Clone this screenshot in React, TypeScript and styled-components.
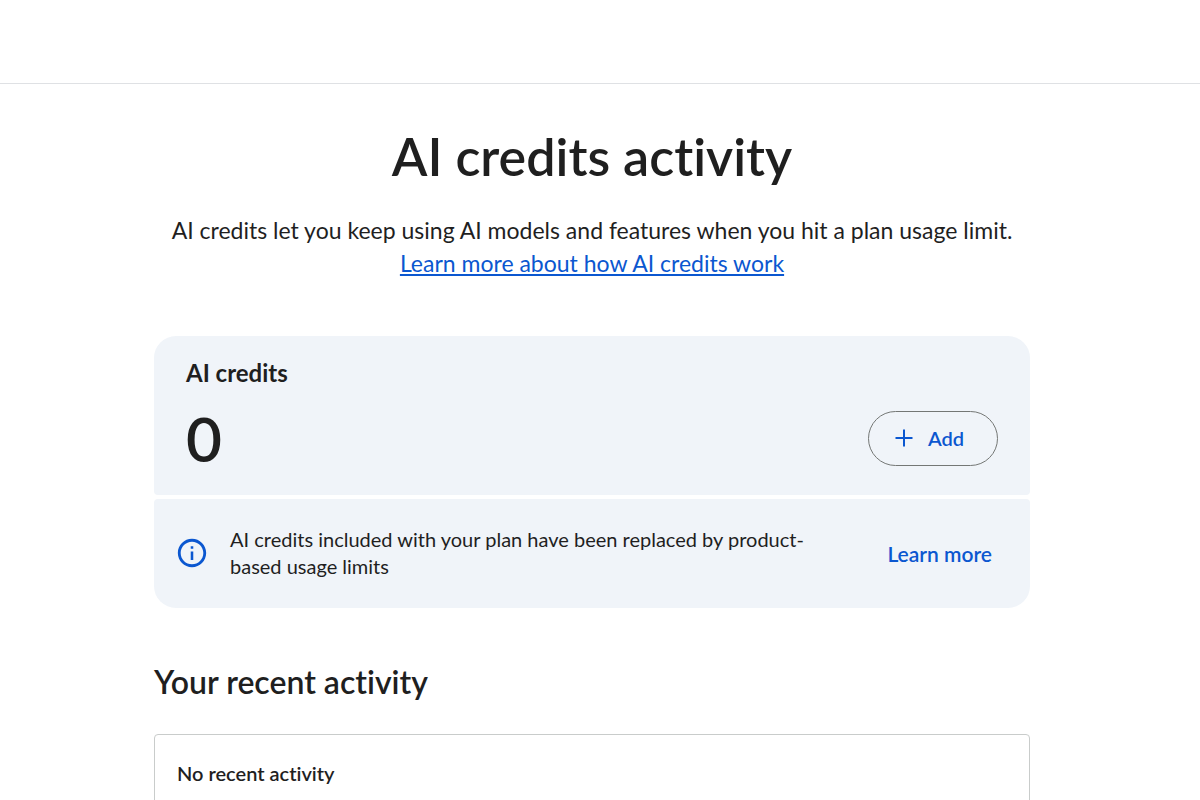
import React from "react";
import styled, { createGlobalStyle } from "styled-components";

const GlobalStyle = createGlobalStyle`
  *, *::before, *::after { box-sizing: border-box; }
  html { scrollbar-width: none; }
  body {
    margin: 0;
    background: #fff;
    color: #1f1f1f;
    font-family: Lato, "Open Sans", sans-serif;
    font-variant-ligatures: none;
  }
`;

const TopBar = styled.header`
  height: 84px;
  border-bottom: 1px solid #dfe1e4;
`;

const Shell = styled.div`
  padding-right: 16px;
`;

const Page = styled.main`
  max-width: 876px;
  margin: 0 auto;
  padding: 40px 0 48px;
`;

const Title = styled.h1`
  margin: 0;
  font-size: 52px;
  line-height: 64px;
  font-weight: 600;
  text-align: center;
`;

const Intro = styled.p`
  margin: 26px 0 0;
  font-size: 23px;
  line-height: 33px;
  text-align: center;
`;

const TextLink = styled.a`
  color: #0b57d0;
  text-decoration: underline;
`;

const Cards = styled.section`
  display: flex;
  flex-direction: column;
  gap: 4px;
  margin-top: 56px;
`;

const Balance = styled.div`
  padding: 20px 32px 17px;
  border-radius: 22px 22px 4px 4px;
  background: #f0f4f9;
`;

const BalanceRow = styled.div`
  display: flex;
  align-items: center;
  justify-content: space-between;
  margin-top: 8px;
`;

const Notice = styled.div`
  display: flex;
  align-items: center;
  gap: 21px;
  padding: 27px 38px 28px 21px;
  border-radius: 4px 4px 22px 22px;
  background: #f0f4f9;
  font-size: 20px;
  line-height: 27px;
`;

const Label = styled.h2`
  margin: 0;
  font-size: 24px;
  line-height: 34px;
  font-weight: 700;
`;

const Amount = styled.div`
  font-size: 62px;
  line-height: 80px;
  font-weight: 600;
`;

const AddButton = styled.button`
  display: flex;
  align-items: center;
  gap: 15px;
  height: 55px;
  padding: 0 33px 0 26px;
  border: 1px solid #747775;
  border-radius: 28px;
  background: transparent;
  color: #0b57d0;
  font-family: inherit;
  font-size: 20px;
  line-height: 28px;
  font-weight: 600;
`;

const InfoIcon = styled.svg`
  flex: none;
  width: 34px;
  height: 34px;
  fill: #0b57d0;
`;

const Message = styled.p`
  flex: 1;
  margin: 0;
`;

const MessageText = styled.span`
  display: block;
  max-width: 600px;
`;

const LearnLink = styled.a`
  color: #0b57d0;
  font-size: 21px;
  font-weight: 600;
  text-decoration: none;
`;

const Heading = styled.h2`
  margin: 54px 0 0;
  font-size: 32px;
  line-height: 40px;
  font-weight: 600;
`;

const Activity = styled.div`
  margin-top: 32px;
  padding: 24px 22px;
  border: 1px solid #c9cccb;
  border-radius: 4px;
  font-size: 20px;
  line-height: 28px;
  font-weight: 600;
`;

export default function App() {
  return (
    <>
      <GlobalStyle />
      <TopBar />
      <Shell>
        <Page>
          <Title>AI credits activity</Title>
          <Intro>
            AI credits let you keep using AI models and features when you hit a plan usage limit.
            <br />
            <TextLink href="#">Learn more about how AI credits work</TextLink>
          </Intro>
          <Cards>
            <Balance>
              <Label>AI credits</Label>
              <BalanceRow>
                <Amount>0</Amount>
                <AddButton type="button">
                  <svg width="18" height="18" viewBox="0 0 18 18" fill="currentColor" aria-hidden="true">
                    <path d="M8 0.5h2V8h7.5v2H10v7.5H8V10H0.5V8H8z" />
                  </svg>
                  Add
                </AddButton>
              </BalanceRow>
            </Balance>
            <Notice>
              <InfoIcon viewBox="0 0 24 24" aria-hidden="true">
                <path d="M11.1 7.200h1.800v1.800h-1.800zm0 3.800h1.800v6h-1.800zM12 2C6.48 2 2 6.48 2 12s4.48 10 10 10 10-4.48 10-10S17.52 2 12 2zm0 18c-4.41 0-8-3.59-8-8s3.59-8 8-8 8 3.59 8 8-3.59 8-8 8z" />
              </InfoIcon>
              <Message>
                <MessageText>
                  AI credits included with your plan have been replaced by product-based usage limits
                </MessageText>
              </Message>
              <LearnLink href="#">Learn more</LearnLink>
            </Notice>
          </Cards>
          <Heading>Your recent activity</Heading>
          <Activity>No recent activity</Activity>
        </Page>
      </Shell>
    </>
  );
}
